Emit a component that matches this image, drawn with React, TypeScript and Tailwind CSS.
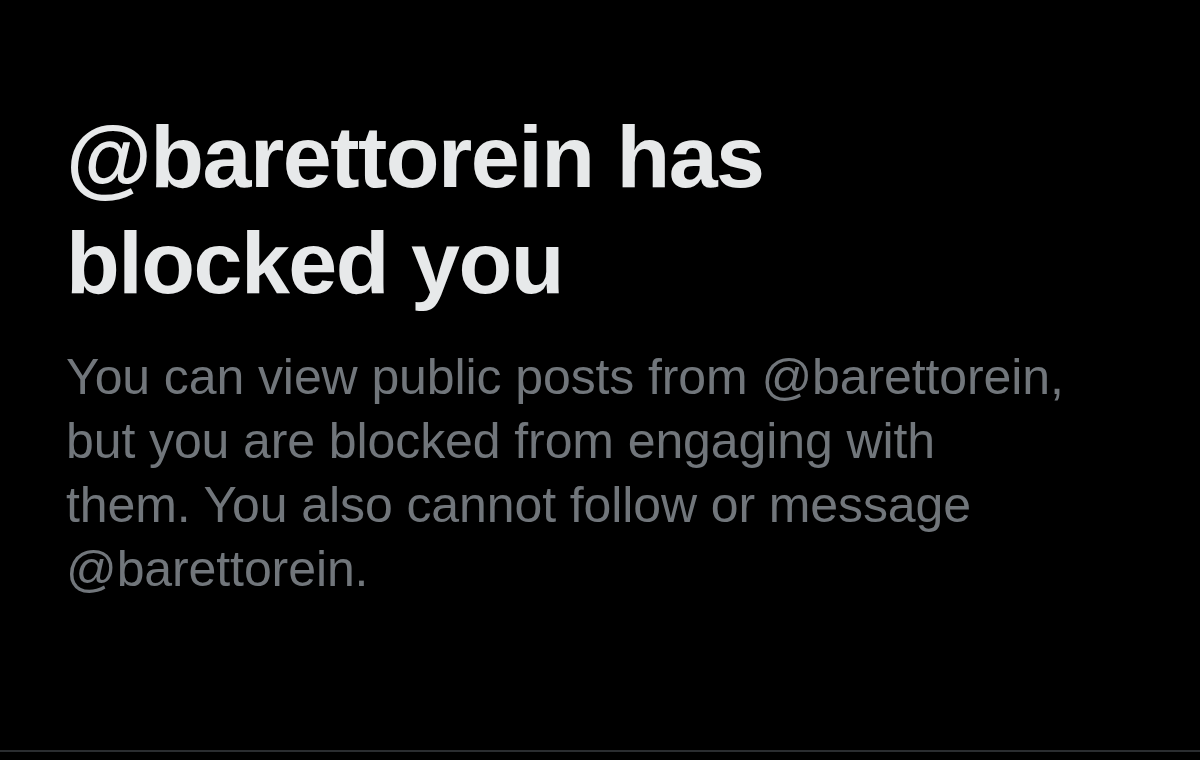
import React from "react";

const App = () => {
  return (
    <div className="flex flex-col w-[1200px] h-[760px] bg-black overflow-hidden font-['Liberation_Sans',Arial,sans-serif]">
      <div className="flex-1 pt-[104px] pl-[66px]">
        <h1 className="text-[88px] leading-[106px] font-[700] tracking-[-1.5px] text-[#e7e9ea]">
          @barettorein has
          <br />
          blocked you
        </h1>
        <p className="mt-[29px] text-[50px] leading-[64px] font-[400] tracking-[-0.1px] text-[#71767b]">
          You can view public posts from @barettorein,
          <br />
          but you are blocked from engaging with
          <br />
          them. You also cannot follow or message
          <br />
          @barettorein.
        </p>
      </div>
      <div className="h-[2px] bg-[#2a2d30]" />
      <div className="h-[8px]" />
    </div>
  );
};

export default App;
